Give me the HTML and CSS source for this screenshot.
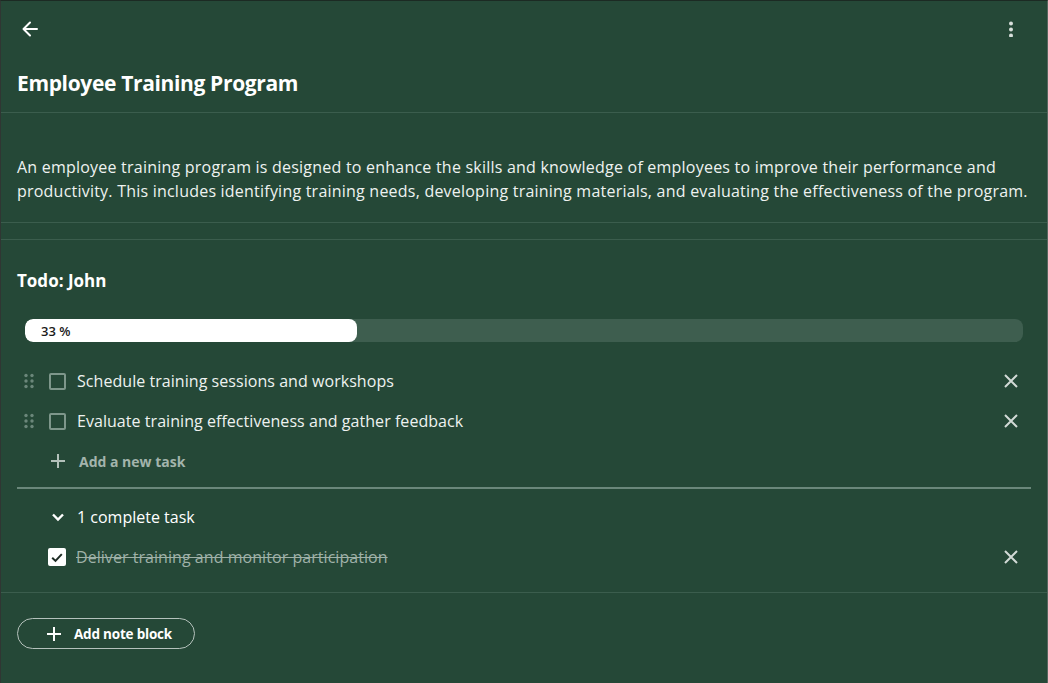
FILE: index.html
```html
<!DOCTYPE html>
<html>
<head>
<meta charset="utf-8">
<link rel="stylesheet" href="styles.css">
</head>
<body>
<div class="page">
  <header class="topbar">
    <button class="icon-btn back" aria-label="Back">
      <svg width="20" height="20" viewBox="0 0 20 20"><path d="M17 10H4M10 3.5L3.5 10L10 16.5" fill="none" stroke="#fff" stroke-width="2" stroke-linecap="round" stroke-linejoin="round"/></svg>
    </button>
    <button class="icon-btn kebab" aria-label="More">
      <svg width="6" height="16" viewBox="0 0 6 16"><circle cx="3" cy="2.5" r="2" fill="#d8dfdb"/><circle cx="3" cy="8.5" r="2" fill="#d8dfdb"/><circle cx="3" cy="14.5" r="2" fill="#d8dfdb"/></svg>
    </button>
  </header>
  <h1 class="title">Employee Training Program</h1>
  <section class="desc">
    <p>An employee training program is designed to enhance the skills and knowledge of employees to improve their performance and productivity. This includes identifying training needs, developing training materials, and evaluating the effectiveness of the program.</p>
  </section>
  <div class="spacer"></div>
  <section class="todo">
    <h2 class="todo-title">Todo: John</h2>
    <div class="progress">
      <div class="progress-fill" style="width:33.3%"><span>33 %</span></div>
    </div>
    <ul class="tasks">
      <li class="task">
        <span class="handle"><svg width="10" height="16" viewBox="0 0 10 16"><g fill="#6b877a"><circle cx="2" cy="2.5" r="1.7"/><circle cx="8" cy="2.5" r="1.7"/><circle cx="2" cy="8" r="1.7"/><circle cx="8" cy="8" r="1.7"/><circle cx="2" cy="13.5" r="1.7"/><circle cx="8" cy="13.5" r="1.7"/></g></svg></span>
        <span class="box"></span>
        <span class="task-text">Schedule training sessions and workshops</span>
        <span class="close"><svg width="16" height="16" viewBox="0 0 16 16"><path d="M2 2L14 14M14 2L2 14" stroke="#d2dad6" stroke-width="2"/></svg></span>
      </li>
      <li class="task">
        <span class="handle"><svg width="10" height="16" viewBox="0 0 10 16"><g fill="#6b877a"><circle cx="2" cy="2.5" r="1.7"/><circle cx="8" cy="2.5" r="1.7"/><circle cx="2" cy="8" r="1.7"/><circle cx="8" cy="8" r="1.7"/><circle cx="2" cy="13.5" r="1.7"/><circle cx="8" cy="13.5" r="1.7"/></g></svg></span>
        <span class="box"></span>
        <span class="task-text">Evaluate training effectiveness and gather feedback</span>
        <span class="close"><svg width="16" height="16" viewBox="0 0 16 16"><path d="M2 2L14 14M14 2L2 14" stroke="#d2dad6" stroke-width="2"/></svg></span>
      </li>
    </ul>
    <div class="add-task">
      <svg width="16" height="16" viewBox="0 0 16 16"><path d="M8 1V15M1 8H15" stroke="#b3c1ba" stroke-width="2"/></svg>
      <span>Add a new task</span>
    </div>
    <div class="divider"></div>
    <div class="complete-head">
      <svg width="14" height="10" viewBox="0 0 14 10"><path d="M2 2.5L7 7.5L12 2.5" fill="none" stroke="#fff" stroke-width="2.4"/></svg>
      <span>1 complete task</span>
    </div>
    <div class="task done">
      <span class="box checked"><svg width="15" height="15" viewBox="0 0 14 14"><path d="M2.2 7.2L5.5 10.4L11.8 3.6" fill="none" stroke="#1d2b24" stroke-width="2"/></svg></span>
      <span class="task-text">Deliver training and monitor participation</span>
      <span class="close"><svg width="16" height="16" viewBox="0 0 16 16"><path d="M2 2L14 14M14 2L2 14" stroke="#d2dad6" stroke-width="2"/></svg></span>
    </div>
  </section>
  <div class="footer">
    <button class="add-note">
      <svg width="16" height="16" viewBox="0 0 16 16"><path d="M8 1V15M1 8H15" stroke="#fff" stroke-width="2"/></svg>
      <span>Add note block</span>
    </button>
  </div>
</div>
</body>
</html>
```
FILE: styles.css
```css
* { box-sizing: border-box; }
html, body { margin: 0; padding: 0; background: #254837; }
body {
  font-family: "Open Sans", "Noto Sans", sans-serif;
  color: #fff;
  width: 1048px;
  height: 683px;
  overflow: hidden;
}
.page {
  height: 683px;
  border-top: 1px solid #1c2a23;
  border-left: 1px solid #303633;
  border-right: 1px solid #56665e;
}
.topbar {
  height: 55px;
  display: flex;
  align-items: center;
  justify-content: space-between;
  padding: 0 33px 0 19px;
}
.icon-btn {
  background: none;
  border: 0;
  padding: 0;
  display: flex;
  align-items: center;
  cursor: pointer;
}
.title {
  margin: 0;
  padding: 0 16px;
  height: 57px;
  font-size: 21px;
  font-weight: 700;
  line-height: 55px;
  border-bottom: 1px solid #3b5d4d;
  letter-spacing: -0.35px;
}
.desc {
  padding: 42px 16px 19px;
  border-bottom: 1px solid #3b5d4d;
}
.desc p {
  margin: 0;
  font-size: 16px;
  line-height: 24px;
  color: #eef2f0;
  letter-spacing: 0.22px;
}
.spacer {
  height: 17px;
  border-bottom: 1px solid #3b5d4d;
}
.todo {
  padding: 29px 16px 0;
  border-bottom: 1px solid #3b5d4d;
}
.todo-title {
  margin: 0;
  font-size: 17px;
  font-weight: 700;
  line-height: 24px;
  letter-spacing: 0;
}
.progress {
  margin: 26px 8px 0 8px;
  height: 23px;
  background: #3e5e4f;
  border-radius: 8px;
  overflow: hidden;
}
.progress-fill {
  height: 100%;
  background: #fff;
  border-radius: 8px;
  display: flex;
  align-items: center;
  padding-left: 16px;
}
.progress-fill span {
  font-size: 13px;
  color: #1a1a1a;
  font-weight: 600;
}
.tasks {
  list-style: none;
  margin: 19px 0 0;
  padding: 0;
}
.task {
  display: flex;
  align-items: center;
  height: 40px;
}
.handle {
  width: 10px;
  display: flex;
  margin-left: 7px;
  margin-right: 15px;
}
.box {
  width: 17px;
  height: 17px;
  border: 2px solid #7e978b;
  border-radius: 2px;
  flex: none;
}
.box.checked {
  width: 18px;
  height: 18px;
  background: #fff;
  border-color: #fff;
  display: flex;
  align-items: center;
  justify-content: center;
}
.task-text {
  margin-left: 11px;
  font-size: 16px;
  color: #eef2f0;
  flex: 1;
  letter-spacing: 0.05px;
}
.task.done .task-text {
  margin-left: 10px;
}
.close {
  display: flex;
  margin-right: 12px;
}
.add-task {
  display: flex;
  align-items: center;
  height: 40px;
  padding-left: 33px;
}
.add-task span {
  margin-left: 13px;
  font-size: 14px;
  font-weight: 700;
  color: #a3b4ac;
}
.divider {
  margin-top: 6px;
  height: 2px;
  background: #6a877a;
}
.complete-head {
  display: flex;
  align-items: center;
  height: 48px;
  padding-left: 34px;
  padding-top: 8px;
}
.complete-head span {
  margin-left: 12px;
  font-size: 16px;
}
.task.done {
  height: 40px;
  margin-bottom: 15px;
  padding-left: 31px;
}
.task.done .task-text {
  text-decoration: line-through;
  color: #9fb1a8;
}
.footer {
  padding: 25px 16px;
}
.add-note {
  display: flex;
  align-items: center;
  width: 178px;
  height: 31px;
  border: 1px solid #b5c2bc;
  border-radius: 16px;
  background: transparent;
  color: #fff;
  padding: 0 0 0 28px;
  font-family: inherit;
  cursor: pointer;
}
.add-note span {
  margin-left: 12px;
  font-size: 13.5px;
  font-weight: 700;
  letter-spacing: -0.2px;
}
```
